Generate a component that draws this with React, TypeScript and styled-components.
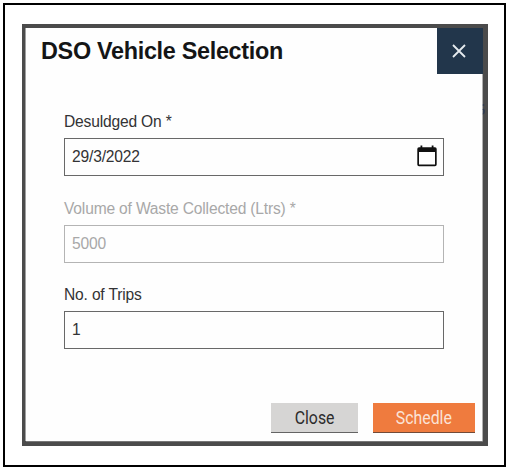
import React from "react";
import styled, { createGlobalStyle } from "styled-components";

const GlobalStyle = createGlobalStyle`
  * { box-sizing: border-box; }
  body { margin: 0; background: #fff; font-family: "Liberation Sans", Arial, sans-serif; }
`;

const Frame = styled.div`
  width: 503px;
  height: 464px;
  margin: 3px 0 0 3px;
  border: 2px solid #000;
  padding: 19px 0 0 17px;
  display: flow-root;
`;

const Backdrop = styled.div`
  position: relative;
  width: 466px;
  height: 422px;
  padding: 4px 5px 5px 4px;
  background: #4b4b4b;
`;

const BackdropMark = styled.svg`
  position: absolute;
  left: 460px;
  top: 79px;
`;

const Dialog = styled.section`
  display: flex;
  flex-direction: column;
  height: 413px;
  background: #fefefe;
  border-right: 1px solid #b0b0b0;
  box-shadow: -1px 0 0 #a0a0a0, 0 1px 0 #777;
`;

const Header = styled.header`
  display: flex;
  justify-content: space-between;
  height: 46px;
  padding-left: 15px;
`;

const Title = styled.h1`
  margin: 0;
  font-size: 23.4px;
  letter-spacing: -0.3px;
  line-height: 46px;
  color: #141516;
  white-space: nowrap;
`;

const CloseIconButton = styled.button`
  display: flex;
  align-items: center;
  justify-content: center;
  width: 46px;
  height: 46px;
  margin-right: -0.5px;
  padding: 0 1px 0 0;
  border: 0;
  background: #22364b;
`;

const Form = styled.div`
  display: flex;
  flex-direction: column;
  padding: 38px 38px 0;
`;

const Field = styled.label<{ $muted?: boolean }>`
  display: flex;
  flex-direction: column;
  height: 86.6px;
  font-size: 15.6px;
  letter-spacing: -0.18px;
  color: ${(p) => (p.$muted ? "#a8a8a8" : "#333335")};
`;

const Label = styled.span`
  height: 26px;
  line-height: 20px;
  white-space: nowrap;
`;

const InputBox = styled.span<{ $muted?: boolean }>`
  display: flex;
  align-items: center;
  justify-content: space-between;
  width: 380px;
  height: 38px;
  padding: 0 6px 0 7px;
  border: 1px solid ${(p) => (p.$muted ? "#b4b4b4" : "#686868")};
`;

const Actions = styled.footer`
  display: flex;
  justify-content: flex-end;
  gap: 15px;
  margin-top: auto;
  padding: 0 7px 8px 0;
`;

const ActionButton = styled.button<{ $primary?: boolean }>`
  display: flex;
  align-items: center;
  justify-content: center;
  width: ${(p) => (p.$primary ? 102 : 87)}px;
  height: 30px;
  padding: 0;
  border: 0;
  border-bottom: 1px solid ${(p) => (p.$primary ? "#714a38" : "#646464")};
  background: ${(p) => (p.$primary ? "#ef7b3e" : "#d6d5d4")};
  color: ${(p) => (p.$primary ? "#fbe3d6" : "#2c2c2c")};
  font-family: Roboto, sans-serif;
  font-size: 18px;
`;

const Condensed = styled.span`
  display: block;
  transform: scaleX(0.88);
`;

const CrossIcon = () => (
  <svg width="14" height="14" viewBox="0 0 14 14">
    <path d="M1 1L13 13M13 1L1 13" stroke="#e6ebef" strokeWidth="1.8" />
  </svg>
);

const CalendarIcon = () => (
  <svg width="20" height="24" viewBox="0 0 20 24">
    <path fill="#101010" d="M3.500 .5h1.800v1.700h9.400V.5h1.800v1.700H18a1.700 1.700 0 0 1 1.700 1.700v15.600a1.700 1.700 0 0 1-1.700 1.700H2A1.700 1.700 0 0 1 .3 19.500V3.900A1.700 1.700 0 0 1 2 2.200h1.500zM2 7v12.500h16V7z" fillRule="evenodd" />
  </svg>
);

export default function App() {
  return (
    <>
      <GlobalStyle />
      <Frame>
        <Backdrop>
          <Dialog>
            <Header>
              <Title>DSO Vehicle Selection</Title>
              <CloseIconButton aria-label="Close dialog">
                <CrossIcon />
              </CloseIconButton>
            </Header>
            <Form>
              <Field>
                <Label>Desuldged On *</Label>
                <InputBox>
                  29/3/2022
                  <CalendarIcon />
                </InputBox>
              </Field>
              <Field $muted>
                <Label>Volume of Waste Collected (Ltrs) *</Label>
                <InputBox $muted>5000</InputBox>
              </Field>
              <Field>
                <Label>No. of Trips</Label>
                <InputBox>1</InputBox>
              </Field>
            </Form>
            <Actions>
              <ActionButton>
                <Condensed>Close</Condensed>
              </ActionButton>
              <ActionButton $primary>
                <Condensed>Schedle</Condensed>
              </ActionButton>
            </Actions>
          </Dialog>
          <BackdropMark width="4" height="12" viewBox="0 0 4 12" aria-hidden>
            <path d="M1 1.500L2 2.500M1 6Q2.500 7 2 9T1 10.500" fill="none" stroke="#29374f" strokeWidth="1.500" />
          </BackdropMark>
        </Backdrop>
      </Frame>
    </>
  );
}
